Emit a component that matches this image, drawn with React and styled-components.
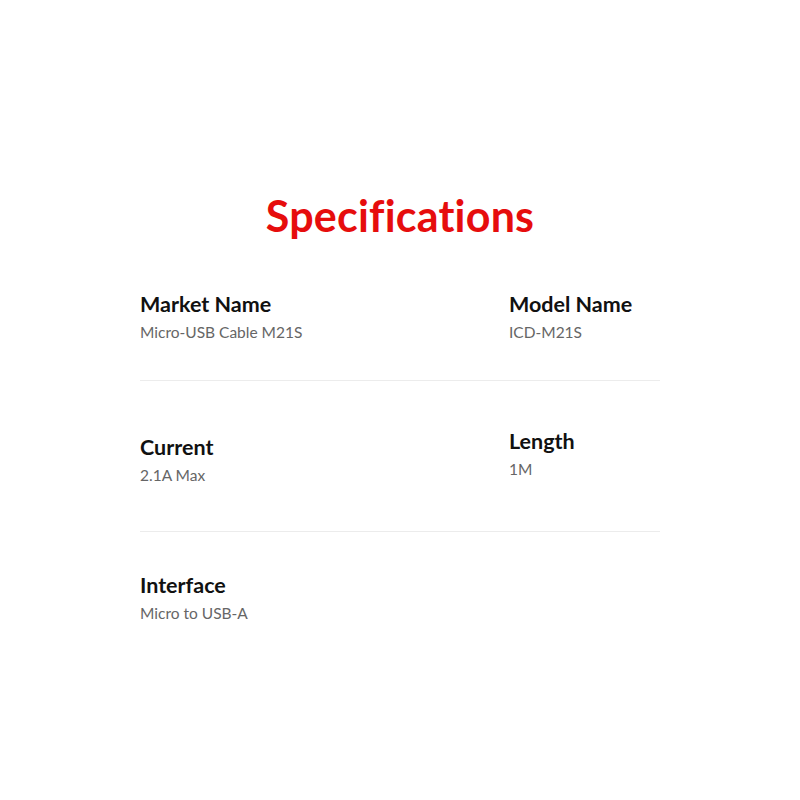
import React from 'react';
import styled, { createGlobalStyle } from 'styled-components';

const GlobalStyle = createGlobalStyle`
  html, body {
    margin: 0;
    padding: 0;
    background: #ffffff;
  }
  body {
    font-family: "Century Gothic", "Lato", "DejaVu Sans", sans-serif;
  }
`;

const Page = styled.div`
  width: 800px;
  height: 800px;
  display: flex;
  flex-direction: column;
  align-items: center;
  padding-top: 190px;
  box-sizing: border-box;
`;

const Title = styled.h1`
  margin: 0;
  font-size: 43px;
  line-height: 52px;
  font-weight: 700;
  color: #e60d0d;
  letter-spacing: 0.2px;
`;

const Table = styled.div`
  width: 520px;
  margin-top: 49px;
  display: flex;
  flex-direction: column;
`;

const Row = styled.div`
  display: grid;
  grid-template-columns: 369px 1fr;
  padding: ${p => p.$top}px 0 ${p => p.$bottom}px;
  border-bottom: ${p => (p.$last ? 'none' : '1px solid #ececec')};
`;

const Cell = styled.div`
  display: flex;
  flex-direction: column;
  margin-top: ${p => (p.$lift ? '-6px' : '0')};
`;

const Label = styled.div`
  font-size: 21.5px;
  line-height: 26px;
  font-weight: 700;
  color: #111111;
`;

const Value = styled.div`
  font-size: 15.5px;
  line-height: 22px;
  margin-top: 4px;
  color: #666666;
`;

const rows = [
  {
    top: 0,
    bottom: 37,
    cells: [
      { label: 'Market Name', value: 'Micro-USB Cable M21S' },
      { label: 'Model Name', value: 'ICD-M21S' },
    ],
  },
  {
    top: 53,
    bottom: 45,
    cells: [
      { label: 'Current', value: '2.1A Max' },
      { label: 'Length', value: '1M', lift: true },
    ],
  },
  {
    top: 40,
    bottom: 0,
    last: true,
    cells: [{ label: 'Interface', value: 'Micro to USB-A' }],
  },
];

export default function App() {
  return (
    <>
      <GlobalStyle />
      <Page>
        <Title>Specifications</Title>
        <Table>
          {rows.map((row, i) => (
            <Row key={i} $top={row.top} $bottom={row.bottom} $last={row.last}>
              {row.cells.map(cell => (
                <Cell key={cell.label} $lift={cell.lift}>
                  <Label>{cell.label}</Label>
                  <Value>{cell.value}</Value>
                </Cell>
              ))}
            </Row>
          ))}
        </Table>
      </Page>
    </>
  );
}
